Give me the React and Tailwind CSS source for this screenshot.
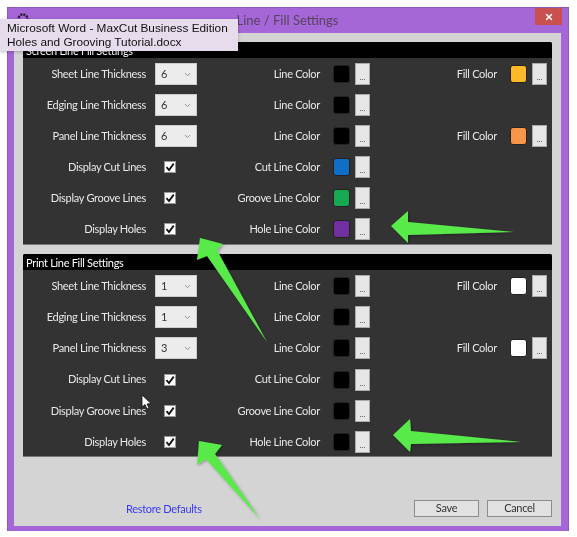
import { ChevronDown, X } from "lucide-react";

const screenRows = [
  { label: "Sheet Line Thickness", value: "6", colorLabel: "Line Color", color: "bg-black", fill: "bg-[#fdb927]" },
  { label: "Edging Line Thickness", value: "6", colorLabel: "Line Color", color: "bg-black" },
  { label: "Panel Line Thickness", value: "6", colorLabel: "Line Color", color: "bg-black", fill: "bg-[#f79646]" },
  { label: "Display Cut Lines", colorLabel: "Cut Line Color", color: "bg-[#0f6fc6]" },
  { label: "Display Groove Lines", colorLabel: "Groove Line Color", color: "bg-[#16a951]" },
  { label: "Display Holes", colorLabel: "Hole Line Color", color: "bg-[#7030a0]" },
];

const printRows = [
  { label: "Sheet Line Thickness", value: "1", colorLabel: "Line Color", color: "bg-black", fill: "bg-white" },
  { label: "Edging Line Thickness", value: "1", colorLabel: "Line Color", color: "bg-black" },
  { label: "Panel Line Thickness", value: "3", colorLabel: "Line Color", color: "bg-black", fill: "bg-white" },
  { label: "Display Cut Lines", colorLabel: "Cut Line Color", color: "bg-black" },
  { label: "Display Groove Lines", colorLabel: "Groove Line Color", color: "bg-black" },
  { label: "Display Holes", colorLabel: "Hole Line Color", color: "bg-black" },
];

function Swatch({ color }) {
  return <div className={`w-[17px] h-[18px] rounded-[3px] border border-[#222] ${color}`} />;
}

function DotsButton() {
  return (
    <div className="w-[15px] h-[22px] flex items-end justify-center bg-[#e6e6e6] border border-[#aaa] text-[8px] leading-[14px] tracking-normal text-[#444]">
      ...
    </div>
  );
}

function Row({ row }) {
  return (
    <div className="h-[22px] flex items-center">
      <div className="w-[123px] text-right text-[#e8e8e8]">{row.label}</div>
      <div className="w-[42px] ml-[9px]">
        {row.value ? (
          <div className="w-[42px] h-[22px] flex items-center justify-between pl-[5px] pr-[4px] bg-[#ececec] border border-[#ccc] text-[#333]">
            <span>{row.value}</span>
            <ChevronDown size={9} className="text-[#777]" />
          </div>
        ) : (
          <div className="ml-[9px] w-[12px] h-[12px] flex items-center justify-center bg-white border border-[#999]">
            <svg width="10" height="10" viewBox="0 0 10 10">
              <path d="M1.5 5.2 L4 8 L8.7 1.6" fill="none" stroke="#111" strokeWidth="1.8" />
            </svg>
          </div>
        )}
      </div>
      <div className="w-[123px] text-right text-[#e8e8e8]">{row.colorLabel}</div>
      <div className="ml-[13px]">
        <Swatch color={row.color} />
      </div>
      <div className="ml-[5px]">
        <DotsButton />
      </div>
      {row.fill && (
        <>
          <div className="w-[127px] text-right text-[#e8e8e8]">Fill Color</div>
          <div className="ml-[13px]">
            <Swatch color={row.fill} />
          </div>
          <div className="ml-[5px]">
            <DotsButton />
          </div>
        </>
      )}
    </div>
  );
}

function Panel({ title, rows, rowGap }) {
  return (
    <section className="h-[203px] bg-[#333333] border-b border-[#777] rounded-t-[2px]">
      <h2 className="h-[16px] pl-[3px] bg-black text-white leading-[17px] rounded-t-[2px]">{title}</h2>
      <div className={`flex flex-col pt-[5px] ${rowGap}`}>
        {rows.map((row) => (
          <Row key={row.label} row={row} />
        ))}
      </div>
    </section>
  );
}

function Arrows() {
  const green = "#59ea49";
  return (
    <svg className="absolute left-0 top-0 pointer-events-none" width="577" height="537">
      <defs>
        <filter id="arrowShadow" x="-20%" y="-20%" width="140%" height="140%">
          <feDropShadow dx="1" dy="1" stdDeviation="1.5" floodColor="#000" floodOpacity="0.35" />
        </filter>
      </defs>
      <g fill={green} filter="url(#arrowShadow)">
        <polygon points="391,226 408,211 408,222 514,232 408,235 408,243" />
        <polygon points="393,435 410,419 411,431 521,442 411,444 410,452" />
        <polygon points="200,238 223,244 217,250 267,342 207,256 197,260" />
        <polygon points="199,441 222,445 215,454 260,519 206,459 197,465" />
      </g>
      {/* mouse pointer */}
      <path d="M142 395 L142 407 L145 404.5 L147 409 L149 408 L147 404 L151 403.5 Z" fill="#fff" stroke="#111" strokeWidth="0.8" />
    </svg>
  );
}

export default function App() {
  return (
    <div className="relative w-[577px] h-[537px] bg-white overflow-hidden font-['Lato',sans-serif] text-[11px] tracking-[-0.3px] blur-[0.35px]">
      <div className="ml-[7px] mt-[7px] w-[562px] h-[524px] flex flex-col bg-[#a566d8] border border-[#8d5bb5] border-b-0">
        {/* title bar */}
        <div className="h-[25px] shrink-0 flex items-center justify-center relative text-[#55435f] text-[13px] tracking-normal">
          <span className="ml-[-1px]">Line / Fill Settings</span>
          <div className="absolute right-[6px] top-0 w-[27px] h-[17px] flex items-center justify-center bg-[#c8504f] text-white">
            <X size={10} strokeWidth={3.5} />
          </div>
        </div>
        <div className="ml-[6px] mr-[6px] w-[547px] h-[493px] p-[9px] flex flex-col gap-[9px] bg-[#d4d4d4]">
          <Panel title="Screen Line Fill Settings" rows={screenRows} rowGap="gap-[9px]" />
          <Panel title="Print Line Fill Settings" rows={printRows} rowGap="gap-[9.2px]" />
          <div className="flex-1 flex items-end">
            <a className="ml-[103px] text-[#3a3af5]">Restore Defaults</a>
            <div className="ml-auto flex gap-[8px]">
              <button className="w-[65px] h-[17px] flex items-center justify-center bg-[#e1e1e1] border border-[#8c8c8c] text-[#333]">Save</button>
              <button className="w-[65px] h-[17px] flex items-center justify-center bg-[#e1e1e1] border border-[#8c8c8c] text-[#333]">Cancel</button>
            </div>
          </div>
        </div>
      </div>

      {/* gear behind the tooltip */}
      <svg className="absolute left-[16px] top-[12px]" width="14" height="14" viewBox="0 0 14 14">
        <circle cx="7" cy="7" r="4.5" fill="none" stroke="#2a1c33" strokeWidth="2.5" strokeDasharray="2 1" />
      </svg>

      {/* word tooltip */}
      <div className="absolute left-0 top-[19px] w-[238px] h-[32px] pl-[7px] flex flex-col justify-center bg-[#e6dcec] text-[#111] font-['Liberation_Sans',sans-serif] text-[11.8px] leading-[14px] tracking-normal shadow-[0_1px_3px_rgba(0,0,0,0.25)]">
        <div>Microsoft Word - MaxCut Business Edition</div>
        <div>Holes and Grooving Tutorial.docx</div>
      </div>

      <Arrows />
    </div>
  );
}
